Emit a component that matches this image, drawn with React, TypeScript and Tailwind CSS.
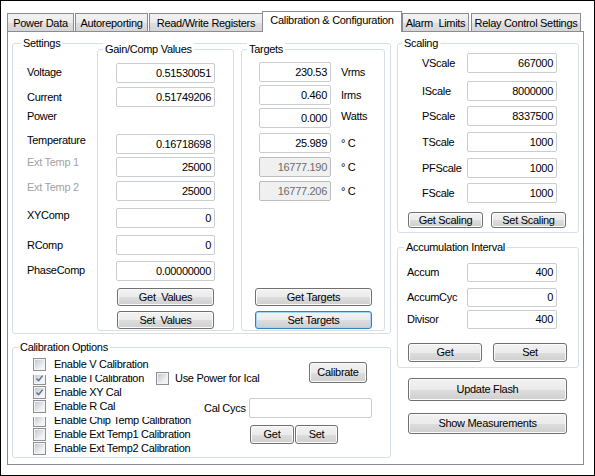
import React from "react";

const btnBase =
  "flex items-center justify-center rounded-[3px] border border-[#707070] bg-[linear-gradient(to_bottom,#f2f2f2_0%,#ebebeb_50%,#dddddd_51%,#cfcfcf_100%)] shadow-[inset_0_0_0_1px_#fbfbfb] leading-[13px] overflow-hidden whitespace-nowrap text-black";
const btnFocus =
  "flex items-center justify-center rounded-[3px] border border-[#3c7fb1] bg-[linear-gradient(to_bottom,#f2f2f2_0%,#ebebeb_50%,#dddddd_51%,#cfcfcf_100%)] shadow-[inset_0_0_0_1px_#9ed8f6] leading-[13px] overflow-hidden whitespace-nowrap text-black";

function Btn({ cls, children, focus }: { cls: string; children: React.ReactNode; focus?: boolean }) {
  return <div className={(focus ? btnFocus : btnBase) + " " + cls}>{children}</div>;
}

const inBase =
  "shrink-0 flex items-center justify-end pr-[3px] bg-white border border-[#c9ccd1] rounded-[2px] leading-[13px] whitespace-nowrap text-black";
const inDis =
  "shrink-0 flex items-center justify-end pr-[3px] bg-[#f0f0f0] border border-[#bcbcbc] rounded-[2px] leading-[13px] whitespace-nowrap text-[#6d6d6d]";

function Field({ cls, children, disabled }: { cls: string; children?: React.ReactNode; disabled?: boolean }) {
  return <div className={(disabled ? inDis : inBase) + " " + cls}>{children}</div>;
}

function Group({
  title,
  cls,
  tcls,
  children,
}: {
  title: string;
  cls: string;
  tcls: string;
  children: React.ReactNode;
}) {
  return (
    <div className={"relative shrink-0 border border-[#d5dfe5] rounded-[3px] " + cls}>
      <span className={"absolute -top-[7px] bg-white px-[2px] leading-[13px] whitespace-nowrap " + tcls}>{title}</span>
      {children}
    </div>
  );
}

function Check({ checked }: { checked?: boolean }) {
  return (
    <div className="relative w-[13px] h-[13px] shrink-0 border border-[#8e8f8f] bg-[#f4f4f4] p-[1px]">
      <div className="w-full h-full bg-[linear-gradient(135deg,#c3c7cd,#eef0f2_70%,#f8f8f8)]" />
      {checked && (
        <svg className="absolute left-[1px] top-[1px]" width="9" height="9" viewBox="0 0 9 9">
          <path d="M1.5 4.6 L3.6 6.8 L7.6 1.6" fill="none" stroke="#5a6c94" strokeWidth="1.4" />
        </svg>
      )}
    </div>
  );
}

function CheckRow({ label, checked, clip }: { label: string; checked?: boolean; clip?: boolean }) {
  return (
    <div className={"h-[14px] flex items-center gap-[8px] whitespace-nowrap leading-[14px] " + (clip ? "[clip-path:inset(4px_-200px_0_0)]" : "")}>
      <Check checked={checked} />
      <span>{label}</span>
    </div>
  );
}

function Tab({ cls, children, sel }: { cls: string; children: React.ReactNode; sel?: boolean }) {
  if (sel) {
    return (
      <div
        className={
          "relative z-20 h-[21px] flex justify-center pt-[2px] leading-[13px] bg-white border-t border-x border-[#898c95] whitespace-nowrap " +
          cls
        }
      >
        {children}
      </div>
    );
  }
  return (
    <div
      className={
        "h-[19px] flex justify-center pt-[3px] leading-[13px] border border-[#898c95] bg-[linear-gradient(to_bottom,#f3f3f3_0%,#ebebeb_50%,#dedede_51%,#d6d6d6_100%)] whitespace-nowrap " +
        cls
      }
    >
      {children}
    </div>
  );
}

export default function App() {
  return (
    <div className="w-[595px] h-[476px] border border-black bg-white overflow-hidden font-['Liberation_Sans',Arial,sans-serif] text-[11px] tracking-[-0.3px] text-black">
      <div className="pl-[6px] pt-[10px]">
        {/* Tabs */}
        <div className="relative z-10 flex items-end h-[21px]">
          <Tab cls="w-[67px]">Power Data</Tab>
          <Tab cls="w-[73px] ml-[1px]">Autoreporting</Tab>
          <Tab cls="w-[114px] ml-[1px]">Read/Write Registers</Tab>
          <Tab cls="w-[140px] -ml-[1px]" sel>
            Calibration &amp; Configuration
          </Tab>
          <Tab cls="w-[67px]">Alarm&nbsp; Limits</Tab>
          <Tab cls="w-[110px] ml-[2px]">Relay Control Settings</Tab>
        </div>

        {/* Panel */}
        <div className="w-[577px] h-[434px] -mt-px border border-[#898c95] bg-white flex pl-[4px] pt-[11px]">
          {/* Left column */}
          <div className="w-[379px] flex flex-col">
            {/* Settings */}
            <Group title="Settings" cls="w-[379px] h-[291px]" tcls="left-[8px]">
              <div className="flex">
                <div className="w-[84px] pl-[14px] flex flex-col leading-[13px] whitespace-nowrap">
                  <div className="h-[13px] mt-[22px]">Voltage</div>
                  <div className="h-[13px] mt-[12px]">Current</div>
                  <div className="h-[13px] mt-[6px]">Power</div>
                  <div className="h-[13px] mt-[11px]">Temperature</div>
                  <div className="h-[13px] mt-[9px] text-[#a3a3a3]">Ext Temp 1</div>
                  <div className="h-[13px] mt-[12px] text-[#a3a3a3]">Ext Temp 2</div>
                  <div className="h-[13px] mt-[15px]">XYComp</div>
                  <div className="h-[13px] mt-[17px]">RComp</div>
                  <div className="h-[13px] mt-[12px]">PhaseComp</div>
                </div>

                <Group title="Gain/Comp Values" cls="w-[137px] h-[282px] mt-[5px]" tcls="left-[5px]">
                  <div className="flex flex-col pl-[18px]">
                    <Field cls="w-[99px] h-[20px] mt-[13px]">0.51530051</Field>
                    <Field cls="w-[99px] h-[20px] mt-[4px]">0.51749206</Field>
                    <Field cls="w-[99px] h-[20px] mt-[27px]">0.16718698</Field>
                    <Field cls="w-[99px] h-[20px] mt-[3px]">25000</Field>
                    <Field cls="w-[99px] h-[20px] mt-[4px]">25000</Field>
                    <Field cls="w-[99px] h-[20px] mt-[7px]">0</Field>
                    <Field cls="w-[99px] h-[20px] mt-[7px]">0</Field>
                    <Field cls="w-[99px] h-[20px] mt-[6px]">0.00000000</Field>
                    <Btn cls="w-[97px] h-[18px] ml-[1px] mt-[7px]">Get&nbsp; Values</Btn>
                    <Btn cls="w-[97px] h-[18px] ml-[1px] mt-[5px]">Set&nbsp; Values</Btn>
                  </div>
                </Group>

                <Group title="Targets" cls="w-[144px] h-[282px] mt-[5px] ml-[7px]" tcls="left-[5px]">
                  <div className="flex flex-col pl-[13px]">
                    <div className="flex mt-[12px] ml-[4px]">
                      <Field cls="w-[72px] h-[20px]">230.53</Field>
                      <span className="ml-[10px] pt-[4px] leading-[13px]">Vrms</span>
                    </div>
                    <div className="flex mt-[3px] ml-[4px]">
                      <Field cls="w-[72px] h-[20px]">0.460</Field>
                      <span className="ml-[10px] pt-[4px] leading-[13px]">Irms</span>
                    </div>
                    <div className="flex mt-[3px] ml-[4px]">
                      <Field cls="w-[72px] h-[20px]">0.000</Field>
                      <span className="ml-[10px] pt-[2px] leading-[13px]">Watts</span>
                    </div>
                    <div className="flex mt-[5px] ml-[4px]">
                      <Field cls="w-[72px] h-[20px]">25.989</Field>
                      <span className="ml-[10px] pt-[4px] leading-[13px]">° C</span>
                    </div>
                    <div className="flex mt-[4px] ml-[4px]">
                      <Field cls="w-[72px] h-[20px]" disabled>
                        16777.190
                      </Field>
                      <span className="ml-[10px] pt-[4px] leading-[13px]">° C</span>
                    </div>
                    <div className="flex mt-[4px] ml-[4px]">
                      <Field cls="w-[72px] h-[20px]" disabled>
                        16777.206
                      </Field>
                      <span className="ml-[10px] pt-[4px] leading-[13px]">° C</span>
                    </div>
                    <Btn cls="w-[117px] h-[18px] mt-[87px]">Get Targets</Btn>
                    <Btn cls="w-[117px] h-[18px] mt-[5px]" focus>
                      Set Targets
                    </Btn>
                  </div>
                </Group>
              </div>
            </Group>

            {/* Calibration Options */}
            <Group title="Calibration Options" cls="w-[379px] h-[111px] mt-[13px]" tcls="left-[5px]">
              <div className="flex">
                <div className="w-[143px] pl-[20px] pt-[9px] flex flex-col">
                  <CheckRow label="Enable V Calibration" />
                  <CheckRow label="Enable I Calibration" checked clip />
                  <CheckRow label="Enable XY Cal" checked />
                  <CheckRow label="Enable R Cal" />
                  <CheckRow label="Enable Chip Temp Calibration" clip />
                  <CheckRow label="Enable Ext Temp1 Calibration" />
                  <CheckRow label="Enable Ext Temp2 Calibration" />
                </div>
                <div className="w-[216px] pt-[14px] flex flex-col">
                  <div className="flex items-start">
                    <div className="h-[14px] mt-[9px] flex items-center gap-[6px] whitespace-nowrap leading-[14px]">
                      <Check />
                      <span>Use Power for Ical</span>
                    </div>
                    <Btn cls="w-[58px] h-[21px] ml-auto mr-[5px]">Calibrate</Btn>
                  </div>
                  <div className="flex items-center mt-[13px] pl-[48px]">
                    <span className="w-[45px] leading-[13px] whitespace-nowrap">Cal Cycs</span>
                    <Field cls="w-[123px] h-[20px]" />
                  </div>
                  <div className="flex mt-[7px] pl-[94px]">
                    <Btn cls="w-[44px] h-[19px]">Get</Btn>
                    <Btn cls="w-[43px] h-[19px] ml-[1px]">Set</Btn>
                  </div>
                </div>
              </div>
            </Group>
          </div>

          {/* Right column */}
          <div className="w-[182px] ml-[6px] flex flex-col">
            <Group title="Scaling" cls="w-[182px] h-[190px]" tcls="left-[4px]">
              <div className="flex flex-col pl-[24px]">
                {[
                  ["VScale", "667000", "mt-[9px]"],
                  ["IScale", "8000000", "mt-[8px]"],
                  ["PScale", "8337500", "mt-[5px]"],
                  ["TScale", "1000", "mt-[6px]"],
                  ["PFScale", "1000", "mt-[6px]"],
                  ["FScale", "1000", "mt-[5px]"],
                ].map(([l, v, m]) => (
                  <div key={l} className={"flex items-center " + m}>
                    <span className="w-[45px] leading-[13px] whitespace-nowrap">{l}</span>
                    <Field cls="w-[90px] h-[20px]">{v}</Field>
                  </div>
                ))}
              </div>
              <div className="flex pl-[10px] mt-[9px]">
                <Btn cls="w-[75px] h-[16px] !items-start pt-[1px]">Get Scaling</Btn>
                <Btn cls="w-[75px] h-[16px] ml-[8px] !items-start pt-[1px]">Set Scaling</Btn>
              </div>
            </Group>

            <Group title="Accumulation Interval" cls="w-[182px] h-[121px] mt-[14px]" tcls="left-[6px]">
              <div className="flex flex-col pl-[9px]">
                <div className="flex items-center mt-[15px]">
                  <span className="w-[60px] leading-[13px]">Accum</span>
                  <Field cls="w-[90px] h-[19px]">400</Field>
                </div>
                <div className="flex items-center mt-[6px]">
                  <span className="w-[60px] leading-[13px]">AccumCyc</span>
                  <Field cls="w-[90px] h-[19px]">0</Field>
                </div>
                <div className="flex items-center mt-[3px]">
                  <span className="w-[60px] leading-[13px]">Divisor</span>
                  <Field cls="w-[90px] h-[19px]">400</Field>
                </div>
              </div>
              <div className="flex pl-[10px] mt-[14px]">
                <Btn cls="w-[74px] h-[19px]">Get</Btn>
                <Btn cls="w-[74px] h-[19px] ml-[11px]">Set</Btn>
              </div>
            </Group>

            <Btn cls="w-[159px] h-[23px] ml-[11px] mt-[10px]">Update Flash</Btn>
            <Btn cls="w-[159px] h-[21px] ml-[11px] mt-[12px]">Show Measurements</Btn>
          </div>
        </div>
      </div>
    </div>
  );
}
